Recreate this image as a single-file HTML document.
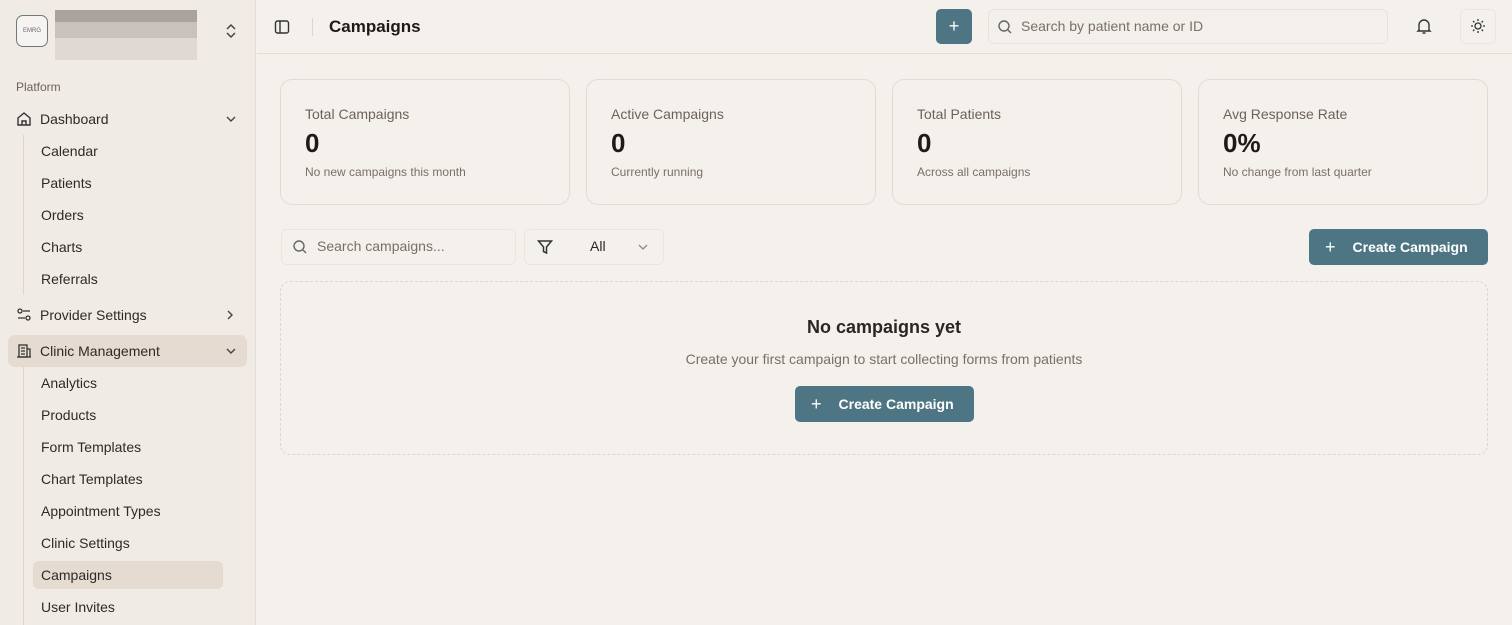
<!DOCTYPE html>
<html><head><meta charset="utf-8"><style>
*{box-sizing:border-box;margin:0;padding:0}
body{width:1512px;height:625px;overflow:hidden;font-family:"Liberation Sans",sans-serif;background:#f4f1ed;color:#2b2622;position:relative}
.sb{position:absolute;left:0;top:0;width:256px;height:625px;background:#f1ebe6;border-right:1px solid #e4ddd6}
.logo{position:absolute;left:16px;top:15px;width:32px;height:32px;border:1.5px solid #6c7a80;border-radius:7px;font-size:6px;color:#667;display:flex;align-items:center;justify-content:center;background:#f6f3f0}
.blur{position:absolute;left:55px;top:10px;width:142px;height:50px;background:linear-gradient(#a9a29d 0,#a9a29d 12px,#c9c1bb 12px,#c9c1bb 28px,#e0d8d2 28px)}
.it{position:absolute;font-size:14px;color:#2f2a26}
.sub{position:absolute;left:41px;font-size:14px;color:#2f2a26}
.vl{position:absolute;left:23px;width:1px;background:#ddd5ce}
.top{position:absolute;left:257px;top:0;right:0;height:54px;border-bottom:1px solid #e3ddd6}
.card{position:absolute;top:79px;width:290px;height:126px;border:1px solid #e2dbd4;border-radius:12px;background:#f4f1ed}
.card .t{position:absolute;left:24px;top:26px;font-size:14px;color:#6d625b}
.card .v{position:absolute;left:24px;top:48px;font-size:26px;font-weight:bold;color:#1f1a17}
.card .s{position:absolute;left:24px;top:85px;font-size:12px;color:#7a6f68}
.btn{position:absolute;background:#4e7584;color:#fff;border-radius:5px;font-size:14px;font-weight:bold;display:flex;align-items:center}
svg{position:absolute}
</style></head><body>
<div class="sb">
<div class="logo">EMRG</div>
<div class="blur"></div>
<svg style="left:224px;top:23px" width="14" height="16" viewBox="0 0 14 16" fill="none" stroke="#444" stroke-width="1.5"><path d="M3 6l4-4 4 4M3 10l4 4 4-4"/></svg>
<div class="it" style="left:16px;top:80px;font-size:12px;color:#6d625b">Platform</div>
<svg style="left:16px;top:111px" width="16" height="16" viewBox="0 0 16 16" fill="none" stroke="#333" stroke-width="1.4"><path d="M2 7l6-5 6 5v7H2z M6 14v-4h4v4"/></svg>
<div class="it" style="left:40px;top:111px">Dashboard</div>
<svg style="left:225px;top:114px" width="12" height="10" viewBox="0 0 12 10" fill="none" stroke="#444" stroke-width="1.4"><path d="M2 3l4 4 4-4"/></svg>
<div class="vl" style="top:135px;height:160px"></div>
<div class="sub" style="top:143px">Calendar</div>
<div class="sub" style="top:175px">Patients</div>
<div class="sub" style="top:207px">Orders</div>
<div class="sub" style="top:239px">Charts</div>
<div class="sub" style="top:271px">Referrals</div>
<svg style="left:16px;top:307px" width="16" height="16" viewBox="0 0 16 16" fill="none" stroke="#333" stroke-width="1.3"><circle cx="4" cy="4" r="2"/><path d="M7 4h7M2 11h7"/><circle cx="12" cy="11" r="2"/></svg>
<div class="it" style="left:40px;top:307px">Provider Settings</div>
<svg style="left:225px;top:309px" width="10" height="12" viewBox="0 0 10 12" fill="none" stroke="#444" stroke-width="1.4"><path d="M3 2l4 4-4 4"/></svg>
<div style="position:absolute;left:8px;top:335px;width:239px;height:32px;background:#e5dbd1;border-radius:7px"></div>
<svg style="left:16px;top:343px" width="16" height="16" viewBox="0 0 16 16" fill="none" stroke="#333" stroke-width="1.3"><rect x="3" y="2" width="8" height="12"/><path d="M11 6h3v8h-3M1 14h14M5 5h4M5 8h4M5 11h4"/></svg>
<div class="it" style="left:40px;top:343px">Clinic Management</div>
<svg style="left:225px;top:346px" width="12" height="10" viewBox="0 0 12 10" fill="none" stroke="#444" stroke-width="1.4"><path d="M2 3l4 4 4-4"/></svg>
<div class="vl" style="top:367px;height:258px"></div>
<div class="sub" style="top:375px">Analytics</div>
<div class="sub" style="top:407px">Products</div>
<div class="sub" style="top:439px">Form Templates</div>
<div class="sub" style="top:471px">Chart Templates</div>
<div class="sub" style="top:503px">Appointment Types</div>
<div class="sub" style="top:535px">Clinic Settings</div>
<div style="position:absolute;left:33px;top:561px;width:190px;height:28px;background:#e5dbd1;border-radius:6px"></div>
<div class="sub" style="top:567px">Campaigns</div>
<div class="sub" style="top:599px">User Invites</div>
</div>
<div class="top">
<svg style="left:17px;top:19px" width="16" height="16" viewBox="0 0 16 16" fill="none" stroke="#333" stroke-width="1.4"><rect x="1.5" y="2" width="13" height="12" rx="2"/><path d="M6 2v12"/></svg>
<div style="position:absolute;left:55px;top:18px;width:1px;height:18px;background:#ddd5ce"></div>
<div style="position:absolute;left:72px;top:17px;font-size:17px;font-weight:bold;color:#1f1a17">Campaigns</div>
<div class="btn" style="left:679px;top:9px;width:36px;height:35px;justify-content:center;font-size:18px;font-weight:normal">+</div>
<div style="position:absolute;left:731px;top:9px;width:400px;height:35px;border:1px solid #e8e2dc;border-radius:6px;background:#f3efeb"></div>
<svg style="left:740px;top:19px" width="16" height="16" viewBox="0 0 16 16" fill="none" stroke="#666" stroke-width="1.4"><circle cx="7" cy="7" r="5"/><path d="M11 11l3 3"/></svg>
<div style="position:absolute;left:764px;top:18px;font-size:14px;color:#7a6f68">Search by patient name or ID</div>
<svg style="left:1159px;top:17px" width="16" height="18" viewBox="0 0 16 18" fill="none" stroke="#333" stroke-width="1.4"><path d="M3 13V8a5 5 0 0110 0v5l1 1H2zM6.5 16h3"/></svg>
<div style="position:absolute;left:1203px;top:9px;width:36px;height:35px;border:1px solid #ebe5df;border-radius:6px"></div>
<svg style="left:1213px;top:18px" width="16" height="16" viewBox="0 0 16 16" fill="none" stroke="#333" stroke-width="1.3"><circle cx="8" cy="8" r="3"/><path d="M8 1v2M8 13v2M1 8h2M13 8h2M3 3l1.4 1.4M11.6 11.6L13 13M3 13l1.4-1.4M11.6 4.4L13 3"/></svg>
</div>
<div class="card" style="left:280px"><div class="t">Total Campaigns</div><div class="v">0</div><div class="s">No new campaigns this month</div></div>
<div class="card" style="left:586px"><div class="t">Active Campaigns</div><div class="v">0</div><div class="s">Currently running</div></div>
<div class="card" style="left:892px"><div class="t">Total Patients</div><div class="v">0</div><div class="s">Across all campaigns</div></div>
<div class="card" style="left:1198px"><div class="t">Avg Response Rate</div><div class="v">0%</div><div class="s">No change from last quarter</div></div>
<div style="position:absolute;left:281px;top:229px;width:235px;height:36px;border:1px solid #ebe5df;border-radius:6px"></div>
<svg style="left:292px;top:239px" width="16" height="16" viewBox="0 0 16 16" fill="none" stroke="#666" stroke-width="1.4"><circle cx="7" cy="7" r="5"/><path d="M11 11l3 3"/></svg>
<div style="position:absolute;left:317px;top:238px;font-size:14px;color:#7a6f68">Search campaigns...</div>
<div style="position:absolute;left:524px;top:229px;width:140px;height:36px;border:1px solid #ebe5df;border-radius:6px"></div>
<svg style="left:537px;top:239px" width="16" height="16" viewBox="0 0 16 16" fill="none" stroke="#333" stroke-width="1.5"><path d="M1.5 2h13l-5 6v6l-3-1.5V8z"/></svg>
<div style="position:absolute;left:590px;top:238px;font-size:14px">All</div>
<svg style="left:637px;top:242px" width="12" height="10" viewBox="0 0 12 10" fill="none" stroke="#888" stroke-width="1.3"><path d="M2 3l4 4 4-4"/></svg>
<div class="btn" style="left:1309px;top:229px;width:179px;height:36px;padding-left:16px"><span style="font-weight:normal;font-size:18px;margin-right:17px">+</span>Create Campaign</div>
<div style="position:absolute;left:280px;top:281px;width:1208px;height:174px;border:1px dashed #ddd6cf;border-radius:10px"></div>
<div style="position:absolute;left:280px;width:1208px;top:317px;text-align:center;font-size:18px;font-weight:bold;color:#2b2622">No campaigns yet</div>
<div style="position:absolute;left:280px;width:1208px;top:351px;text-align:center;font-size:14px;color:#7a6f68">Create your first campaign to start collecting forms from patients</div>
<div class="btn" style="left:795px;top:386px;width:179px;height:36px;padding-left:16px"><span style="font-weight:normal;font-size:18px;margin-right:17px">+</span>Create Campaign</div>
</body></html>
